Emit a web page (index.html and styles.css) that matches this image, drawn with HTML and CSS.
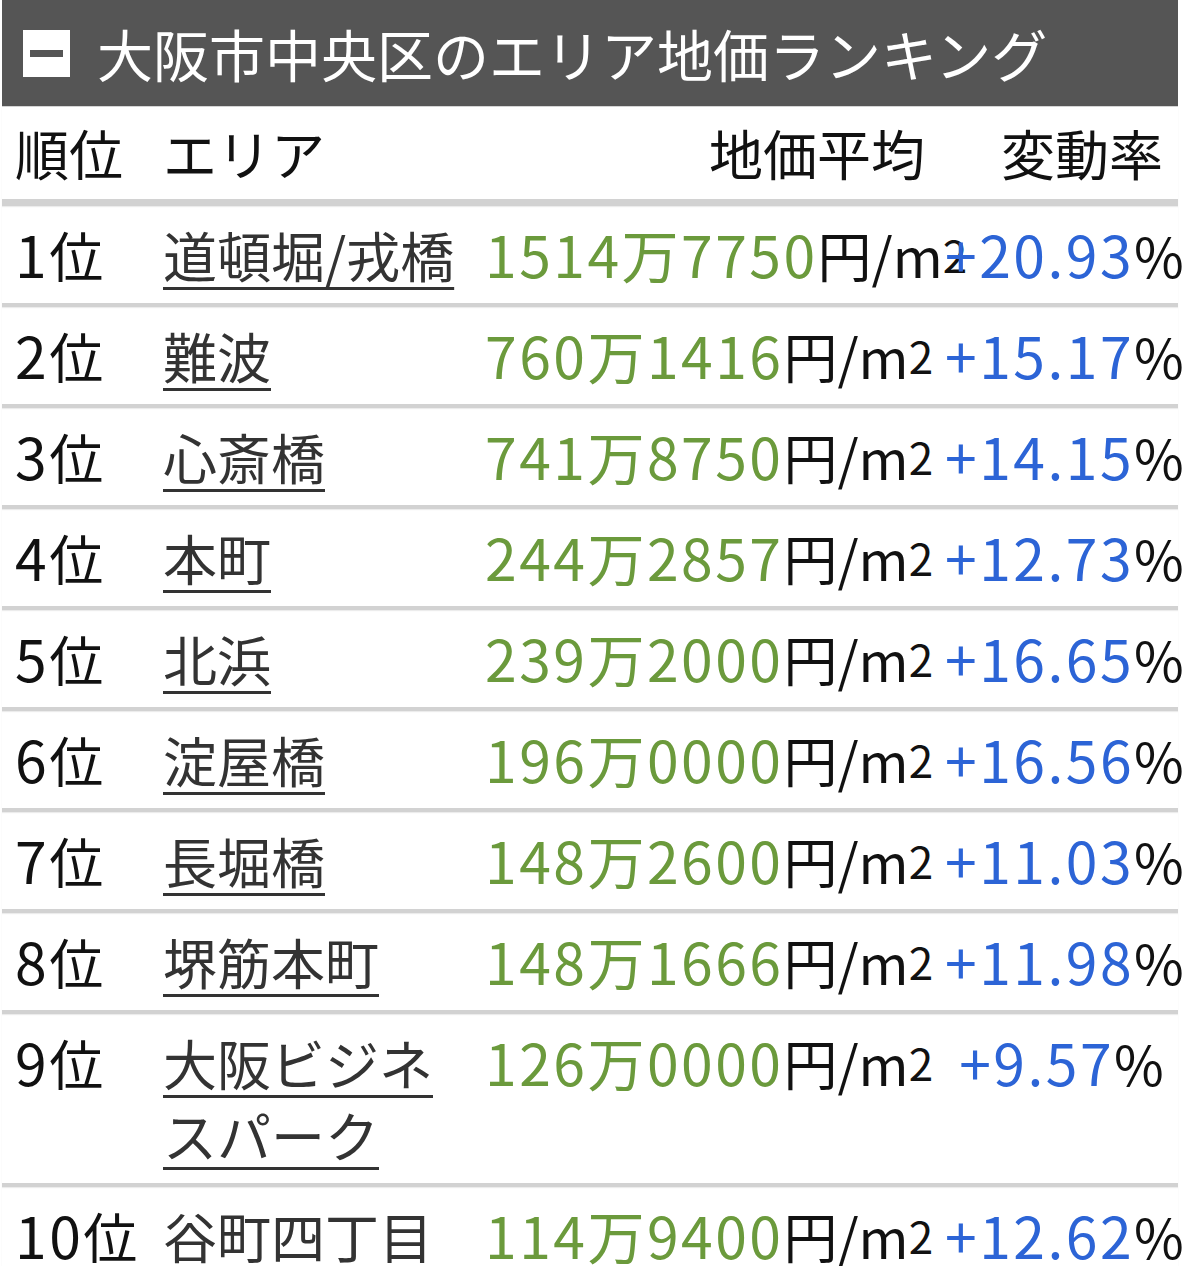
FILE: index.html
```html
<!DOCTYPE html>
<html lang="ja">
<head>
<meta charset="utf-8">
<title>大阪市中央区のエリア地価ランキング</title>
<link rel="stylesheet" href="styles.css">
</head>
<body>
<section class="ranking">
  <header class="ranking-head">
    <span class="toggle" aria-hidden="true"><span class="toggle-bar"></span></span>
    <h2 class="ranking-title">大阪市中央区のエリア地価ランキング</h2>
  </header>
  <div class="table">
    <div class="row row-head">
      <div class="cell rank">順位</div>
      <div class="cell area">エリア</div>
      <div class="cell price head-price">地価平均</div>
      <div class="cell rate head-rate">変動率</div>
    </div>
    <div class="row">
      <div class="cell rank"><span class="num">1</span>位</div>
      <div class="cell area"><a href="#">道頓堀/戎橋</a></div>
      <div class="cell price"><span class="num green">1514万7750</span>円/m<span class="sq">2</span></div>
      <div class="cell rate"><span class="num blue">+20.93</span>%</div>
    </div>
    <div class="row">
      <div class="cell rank"><span class="num">2</span>位</div>
      <div class="cell area"><a href="#">難波</a></div>
      <div class="cell price"><span class="num green">760万1416</span>円/m<span class="sq">2</span></div>
      <div class="cell rate"><span class="num blue">+15.17</span>%</div>
    </div>
    <div class="row">
      <div class="cell rank"><span class="num">3</span>位</div>
      <div class="cell area"><a href="#">心斎橋</a></div>
      <div class="cell price"><span class="num green">741万8750</span>円/m<span class="sq">2</span></div>
      <div class="cell rate"><span class="num blue">+14.15</span>%</div>
    </div>
    <div class="row">
      <div class="cell rank"><span class="num">4</span>位</div>
      <div class="cell area"><a href="#">本町</a></div>
      <div class="cell price"><span class="num green">244万2857</span>円/m<span class="sq">2</span></div>
      <div class="cell rate"><span class="num blue">+12.73</span>%</div>
    </div>
    <div class="row">
      <div class="cell rank"><span class="num">5</span>位</div>
      <div class="cell area"><a href="#">北浜</a></div>
      <div class="cell price"><span class="num green">239万2000</span>円/m<span class="sq">2</span></div>
      <div class="cell rate"><span class="num blue">+16.65</span>%</div>
    </div>
    <div class="row">
      <div class="cell rank"><span class="num">6</span>位</div>
      <div class="cell area"><a href="#">淀屋橋</a></div>
      <div class="cell price"><span class="num green">196万0000</span>円/m<span class="sq">2</span></div>
      <div class="cell rate"><span class="num blue">+16.56</span>%</div>
    </div>
    <div class="row">
      <div class="cell rank"><span class="num">7</span>位</div>
      <div class="cell area"><a href="#">長堀橋</a></div>
      <div class="cell price"><span class="num green">148万2600</span>円/m<span class="sq">2</span></div>
      <div class="cell rate"><span class="num blue">+11.03</span>%</div>
    </div>
    <div class="row">
      <div class="cell rank"><span class="num">8</span>位</div>
      <div class="cell area"><a href="#">堺筋本町</a></div>
      <div class="cell price"><span class="num green">148万1666</span>円/m<span class="sq">2</span></div>
      <div class="cell rate"><span class="num blue">+11.98</span>%</div>
    </div>
    <div class="row">
      <div class="cell rank"><span class="num">9</span>位</div>
      <div class="cell area"><a href="#">大阪ビジネスパーク</a></div>
      <div class="cell price"><span class="num green">126万0000</span>円/m<span class="sq">2</span></div>
      <div class="cell rate"><span class="num blue">+9.57</span>%</div>
    </div>
    <div class="row">
      <div class="cell rank"><span class="num">10</span>位</div>
      <div class="cell area"><a href="#">谷町四丁目</a></div>
      <div class="cell price"><span class="num green">114万9400</span>円/m<span class="sq">2</span></div>
      <div class="cell rate"><span class="num blue">+12.62</span>%</div>
    </div>
  </div>
</section>
</body>
</html>
```

FILE: styles.css
```css
html, body {
  margin: 0;
  padding: 0;
  background: #ffffff;
}

body {
  font-family: "Noto Sans CJK JP", "Noto Sans", sans-serif;
  color: #111111;
  overflow: hidden;
}

.ranking {
  margin-left: 2px;
  width: 1176px;
}

.ranking-head {
  display: flex;
  align-items: center;
  height: 107px;
  padding-left: 21px;
  background: #555555;
  border-bottom: 1px solid #d4d4d4;
  box-sizing: border-box;
}

.toggle {
  display: flex;
  align-items: center;
  justify-content: center;
  width: 47px;
  height: 47px;
  background: #ffffff;
  flex: none;
}

.toggle-bar {
  display: block;
  width: 33px;
  height: 7px;
  background: #555555;
}

.ranking-title {
  margin: 0 0 0 27px;
  font-size: 56px;
  font-weight: 400;
  line-height: 1;
  color: #ffffff;
  white-space: nowrap;
}

.row {
  display: grid;
  grid-template-columns: 148px 322px 460px 233px;
  padding: 13px 0 12px 13px;
  font-size: 54px;
  border-bottom: 4px solid #d2d2d2;
  box-shadow: 0 1px 1px #ececec;
}

.row-head {
  padding-top: 10px;
  padding-bottom: 10px;
  border-bottom-width: 7px;
}

.cell {
  white-space: nowrap;
  line-height: 72px;
}

.area {
  white-space: normal;
}

.area a {
  color: #333333;
  text-decoration: underline;
  text-decoration-thickness: 3px;
  text-underline-offset: 9px;
}

.head-price {
  text-align: right;
  padding-right: 20px;
}

.head-rate {
  text-align: right !important;
  padding-right: 15px;
}

.rate {
  text-align: center;
}

.num {
  font-size: 57px;
  letter-spacing: 2.5px;
  line-height: 1;
}

.green {
  color: #6b9a3c;
}

.blue {
  color: #2c64d6;
}

.sq {
  font-size: 44px;
  vertical-align: 5px;
  line-height: 1;
}
```
